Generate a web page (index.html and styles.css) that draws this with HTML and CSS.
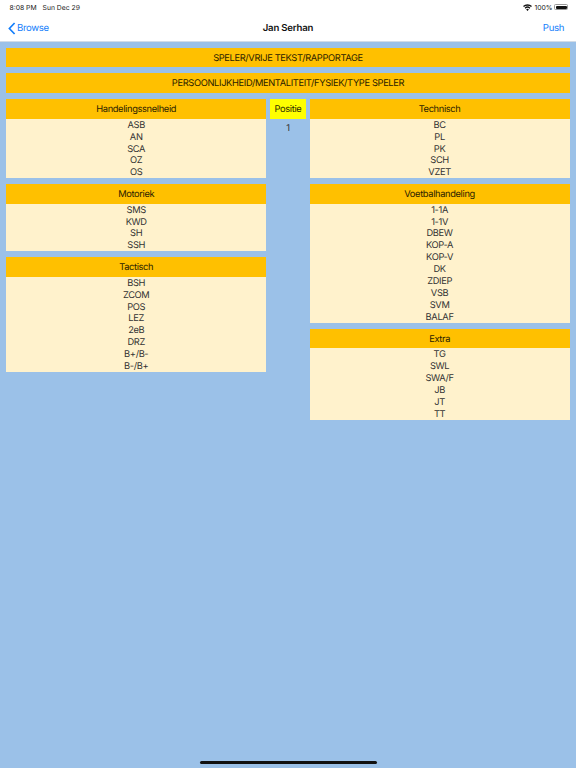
FILE: index.html
```html
<!DOCTYPE html>
<html lang="nl">
<head>
<meta charset="utf-8">
<title>Jan Serhan</title>
<link rel="stylesheet" href="styles.css">
</head>
<body>
<header class="nav">
  <div class="status">
    <span class="status-time">8:08 PM</span>
    <span class="status-date">Sun Dec 29</span>
    <span class="status-right">
      <svg class="wifi" viewBox="0 0 12 9" width="9" height="7"><path d="M6 9 4.2 7a2.6 2.6 0 0 1 3.6 0Z M3.3 6 2.2 4.8a5.5 5.5 0 0 1 7.6 0L8.7 6a4 4 0 0 0-5.4 0Z M1.3 3.9 0 2.6a8.6 8.6 0 0 1 12 0l-1.3 1.3a6.8 6.8 0 0 0-9.4 0Z" fill="#111"/></svg>
      <span>100%</span>
      <span class="battery"><span class="battery-fill"></span></span>
    </span>
  </div>
  <div class="bar">
    <a class="back"><svg viewBox="0 0 8 13" width="8" height="13"><path d="M6.6 1 1.4 6.5l5.2 5.5" fill="none" stroke="#147efb" stroke-width="1.7"/></svg>Browse</a>
    <h1 class="title">Jan Serhan</h1>
    <a class="push">Push</a>
  </div>
</header>
<main class="content">
  <div class="banner">SPELER/VRIJE TEKST/RAPPORTAGE</div>
  <div class="banner">PERSOONLIJKHEID/MENTALITEIT/FYSIEK/TYPE SPELER</div>
  <div class="columns">
    <div class="col">
      <section class="card">
        <h2>Handelingssnelheid</h2>
        <ul><li>ASB</li><li>AN</li><li>SCA</li><li>OZ</li><li>OS</li></ul>
      </section>
      <section class="card">
        <h2>Motoriek</h2>
        <ul><li>SMS</li><li>KWD</li><li>SH</li><li>SSH</li></ul>
      </section>
      <section class="card">
        <h2>Tactisch</h2>
        <ul><li>BSH</li><li>ZCOM</li><li>POS</li><li>LEZ</li><li>2eB</li><li>DRZ</li><li>B+/B-</li><li>B-/B+</li></ul>
      </section>
    </div>
    <div class="pos">
      <div class="pos-head">Positie</div>
      <div class="pos-val">1</div>
    </div>
    <div class="col">
      <section class="card">
        <h2>Technisch</h2>
        <ul><li>BC</li><li>PL</li><li>PK</li><li>SCH</li><li>VZET</li></ul>
      </section>
      <section class="card">
        <h2>Voetbalhandeling</h2>
        <ul><li>1-1A</li><li>1-1V</li><li>DBEW</li><li>KOP-A</li><li>KOP-V</li><li>DK</li><li>ZDIEP</li><li>VSB</li><li>SVM</li><li>BALAF</li></ul>
      </section>
      <section class="card">
        <h2>Extra</h2>
        <ul><li>TG</li><li>SWL</li><li>SWA/F</li><li>JB</li><li>JT</li><li>TT</li></ul>
      </section>
    </div>
  </div>
</main>
<div class="home"></div>
</body>
</html>
```
FILE: styles.css
```css
* { box-sizing: border-box; }
html, body { margin: 0; height: 100%; }
body {
  width: 576px;
  height: 768px;
  overflow: hidden;
  position: relative;
  background: #9bc1e8;
  font-family: Inter, "Liberation Sans", sans-serif;
  color: #222;
  font-size: 9.3px;
  letter-spacing: -0.35px;
  text-rendering: geometricPrecision;
}
.nav {
  height: 42px;
  background: #fff;
  border-bottom: 1px solid #d3dce6;
}
.status {
  height: 14px;
  display: flex;
  align-items: center;
  padding: 0 8px 0 9.5px;
  font-size: 6.8px;
  letter-spacing: 0;
  color: #222;
}
.status-date { margin-left: 6px; }
.status-right {
  margin-left: auto;
  display: flex;
  align-items: center;
  gap: 1.5px;
}
.wifi { margin-right: 1px; }
.battery {
  width: 14px;
  height: 6px;
  border: 0.5px solid #999;
  border-radius: 1.5px;
  padding: 0.5px;
  display: block;
}
.battery-fill { display: block; height: 100%; background: #111; border-radius: 1px; }
.bar {
  height: 27px;
  display: flex;
  align-items: center;
  justify-content: space-between;
  position: relative;
  padding: 1px 12px 0 7.5px;
  font-size: 9.6px;
  letter-spacing: -0.35px;
  color: #147efb;
}
.back { display: flex; align-items: center; gap: 1.5px; }
.title {
  position: absolute;
  left: 0;
  right: 0;
  margin: 0;
  text-align: center;
  font-size: 9.6px;
  font-weight: 600;
  letter-spacing: -0.2px;
  color: #111;
}
.content {
  padding: 5.7px 6px 0;
  display: flex;
  flex-direction: column;
  gap: 5.8px;
}
.banner {
  height: 19.7px;
  background: #ffc000;
  text-align: center;
  line-height: 21.5px;
  color: #2a2000;
}
.columns {
  display: grid;
  grid-template-columns: 260.4px 36px 260px;
  column-gap: 3.6px;
  align-items: start;
  padding-top: 0.3px;
}
.col { display: flex; flex-direction: column; gap: 5.6px; }
.card { background: #fff2cc; }
.card h2 {
  margin: 0;
  height: 19.7px;
  line-height: 21.5px;
  background: #ffc000;
  text-align: center;
  font-size: 9.3px;
  font-weight: 400;
  color: #2a2000;
}
.card ul { margin: 0; padding: 0; list-style: none; }
.card li {
  height: 11.95px;
  line-height: 13px;
  text-align: center;
  color: #333;
}
.pos-head {
  height: 19.7px;
  line-height: 21.5px;
  background: #ffff00;
  text-align: center;
  color: #2a2a00;
}
.pos-val {
  height: 19px;
  line-height: 20px;
  text-align: center;
  color: #333;
}
.home {
  position: absolute;
  left: 200px;
  bottom: 4px;
  width: 177px;
  height: 3px;
  border-radius: 2px;
  background: #111;
}
```
